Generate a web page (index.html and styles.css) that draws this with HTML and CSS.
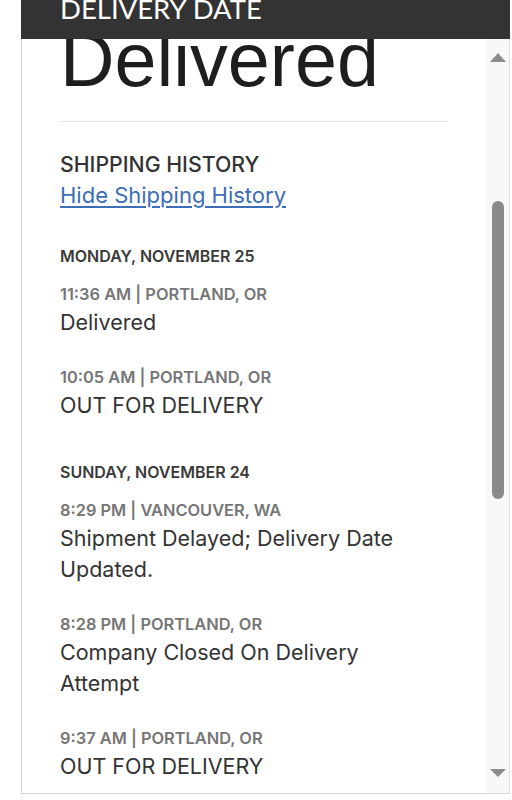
FILE: index.html
```html
<!DOCTYPE html>
<html lang="en">
<head>
<meta charset="utf-8">
<title>Delivery status</title>
<link rel="stylesheet" href="styles.css">
</head>
<body>
<div class="panel">
  <header class="panel-header">
    <h2 class="panel-title">DELIVERY DATE</h2>
  </header>
  <div class="panel-body">
    <div class="content">
      <h1 class="status">Delivered</h1>
      <hr class="divider">
      <section class="history">
        <h3 class="history-title">SHIPPING HISTORY</h3>
        <a class="history-toggle" href="#">Hide Shipping History</a>

        <div class="day">
          <h4 class="day-title">MONDAY, NOVEMBER 25</h4>
          <div class="event">
            <div class="event-meta">11:36 AM | PORTLAND, OR</div>
            <div class="event-desc">Delivered</div>
          </div>
          <div class="event">
            <div class="event-meta">10:05 AM | PORTLAND, OR</div>
            <div class="event-desc">OUT FOR DELIVERY</div>
          </div>
        </div>

        <div class="day">
          <h4 class="day-title">SUNDAY, NOVEMBER 24</h4>
          <div class="event">
            <div class="event-meta">8:29 PM | VANCOUVER, WA</div>
            <div class="event-desc">Shipment Delayed; Delivery Date Updated.</div>
          </div>
          <div class="event">
            <div class="event-meta">8:28 PM | PORTLAND, OR</div>
            <div class="event-desc">Company Closed On Delivery Attempt</div>
          </div>
          <div class="event">
            <div class="event-meta">9:37 AM | PORTLAND, OR</div>
            <div class="event-desc">OUT FOR DELIVERY</div>
          </div>
        </div>
      </section>
    </div>
    <div class="scrollbar" aria-hidden="true">
      <span class="scroll-arrow scroll-up"></span>
      <div class="scroll-track"><div class="scroll-thumb"></div></div>
      <span class="scroll-arrow scroll-down"></span>
    </div>
  </div>
</div>
</body>
</html>
```

FILE: styles.css
```css
* { box-sizing: border-box; }

html, body {
  margin: 0;
  padding: 0;
  background: #ffffff;
}

body {
  font-family: "Inter", "Noto Sans", sans-serif;
  color: #333333;
}

.panel {
  margin-left: 21px;
  width: 489px;
  height: 794px;
  display: flex;
  flex-direction: column;
}

.panel-header {
  position: relative;
  z-index: 1;
  height: 39px;
  flex: none;
  background: #333333;
  padding-left: 39px;
  overflow: hidden;
}

.panel-title {
  margin: -5px 0 0 0;
  font-family: "Lato", "Open Sans", sans-serif;
  font-weight: 400;
  font-size: 27.5px;
  line-height: 28px;
  color: #ffffff;
}

.panel-body {
  flex: 1;
  min-height: 0;
  display: flex;
  border-left: 1px solid #d4d4d4;
  border-bottom: 1px solid #d4d4d4;
}

.content {
  flex: 1;
  min-width: 0;
  overflow: hidden;
  padding: 0 38px;
}

.status {
  margin: -16px 0 0 0;
  font-family: "Liberation Sans", Arial, sans-serif;
  font-weight: 400;
  font-size: 75.5px;
  line-height: 75px;
  color: #1e1e1e;
}

.divider {
  margin: 23px 0 0 0;
  border: 0;
  border-top: 1px solid #e2e2e2;
  height: 0;
}

.history {
  padding-top: 30px;
}

.history-title {
  margin: 0;
  font-size: 21.3px;
  line-height: 24px;
  font-weight: 500;
  color: #333333;
}

.history-toggle {
  display: inline-block;
  margin-top: 7px;
  font-size: 22px;
  line-height: 24px;
  color: #3d6db5;
  text-decoration: underline;
  text-underline-offset: 3px;
}

.day {
  margin-top: 39px;
}

.day + .day {
  margin-top: 41px;
}

.day-title {
  margin: 0 0 18px 0;
  font-size: 16px;
  line-height: 20px;
  font-weight: 600;
  color: #3a3a3a;
}

.event + .event {
  margin-top: 29px;
}

.event-meta {
  font-size: 16.4px;
  line-height: 20px;
  font-weight: 600;
  color: #767676;
}

.event-desc {
  max-width: 372px;
  margin-top: 3px;
  font-size: 21.5px;
  line-height: 31px;
  color: #333333;
}

.scrollbar {
  flex: none;
  width: 24px;
  display: flex;
  flex-direction: column;
  align-items: center;
  background: #f8f8f8;
  border-right: 1px solid #e0e0e0;
  padding: 14px 0 16px 0;
}

.scroll-arrow {
  width: 0;
  height: 0;
  border-left: 8px solid transparent;
  border-right: 8px solid transparent;
}

.scroll-up {
  border-bottom: 9px solid #8c8c8c;
}

.scroll-down {
  border-top: 8px solid #8c8c8c;
}

.scroll-track {
  flex: 1;
  width: 100%;
  display: flex;
  justify-content: center;
  padding-top: 139px;
}

.scroll-thumb {
  width: 12px;
  height: 298px;
  border-radius: 6px;
  background: #8a8a8a;
}
```
